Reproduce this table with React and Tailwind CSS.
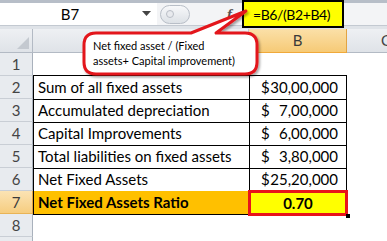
import React from "react";

const rows = [
  { n: 1 },
  { n: 2, a: "Sum of all fixed assets", b: "30,00,000" },
  { n: 3, a: "Accumulated depreciation", b: "7,00,000" },
  { n: 4, a: "Capital Improvements", b: "6,00,000" },
  { n: 5, a: "Total liabilities on fixed assets", b: "3,80,000" },
  { n: 6, a: "Net Fixed Assets", b: "25,20,000" },
  { n: 7, sel: true },
  { n: 8 },
  { n: "" },
];

function RowHeader({ n, sel }) {
  return (
    <div
      className={
        "h-[23px] flex items-center justify-center border-b border-r text-[15px] " +
        (sel
          ? "bg-gradient-to-b from-[#fbe3b4] to-[#f6cd7f] border-b-[#e9b456] border-r-[#e2a443] text-[#3a3a3a]"
          : "bg-[#e8ebef] border-b-[#c9ced5] border-r-[#a9b1bc] text-[#444]")
      }
    >
      {n}
    </div>
  );
}

export default function App() {
  return (
    <div
      className="relative w-[387px] h-[241px] overflow-hidden bg-white"
      style={{ fontFamily: "Lato, 'Liberation Sans', sans-serif" }}
    >
      {/* formula bar */}
      <div className="h-[29px] flex flex-col bg-[#dfe3e8]">
        <div className="h-[3px] bg-[#b7bec8]" />
        <div className="h-[23px] flex bg-white border-b border-[#c3c9d1]">
          <div className="w-[157px] flex items-center">
            <div className="w-[140px] text-center text-[15px] text-black">B7</div>
            <svg width="9" height="6" viewBox="0 0 9 6" className="ml-[2px]">
              <path d="M0 0 L9 0 L4.5 5 Z" fill="#444" />
            </svg>
          </div>
          <div className="flex-1 flex items-center bg-[#f3f4f6]">
            <div className="ml-[3px] w-[30px] h-[19px] rounded-full border border-[#b8bec7] bg-gradient-to-b from-[#f7f8fa] to-[#dde1e6] flex items-center pl-[5px]">
              <div className="w-[8px] h-[8px] rounded-full border border-[#b9bec6] bg-[#e8eaee]" />
            </div>
            <div
              className="ml-[37px] text-[15px] italic font-bold text-[#555]"
              style={{ fontFamily: "'Liberation Serif', serif" }}
            >
              f
            </div>
          </div>
        </div>
      </div>

      {/* header row */}
      <div className="grid grid-cols-[33px_216px_98px_1fr] h-[24px]">
        <div className="relative bg-gradient-to-b from-[#eef0f3] to-[#dfe3e8] border-r border-b border-r-[#b3bac4] border-b-[#b3bac4]">
          <svg width="12" height="12" viewBox="0 0 12 12" className="absolute right-[3px] bottom-[3px]">
            <path d="M12 0 L12 12 L0 12 Z" fill="#c4c9d0" />
          </svg>
        </div>
        <div className="bg-gradient-to-b from-[#eef0f3] to-[#dfe3e8] border-r border-b border-r-[#c3c9d1] border-b-[#b3bac4]" />
        <div className="flex items-center justify-center text-[15px] text-[#3a3a3a] bg-gradient-to-b from-[#fbe0a8] to-[#f6ca76] border-r border-b border-r-[#e2a443] border-b-[#f0a93a]">
          B
        </div>
        <div className="flex items-center justify-end text-[15px] text-[#444] bg-gradient-to-b from-[#eef0f3] to-[#dfe3e8] border-b border-b-[#b3bac4] overflow-hidden">
          <span className="translate-x-[4px]">C</span>
        </div>
      </div>

      {/* rows */}
      {rows.map((r, i) => {
        const inTable = r.n >= 2 && r.n <= 6;
        if (r.sel) {
          return (
            <div key={i} className="grid grid-cols-[33px_216px_98px_1fr] h-[23px]">
              <RowHeader n={r.n} sel />
              <div className="flex items-center pl-[4px] bg-[#ffc000] border-l border-b border-black text-[15px] font-bold text-black">
                Net Fixed Assets Ratio
              </div>
              <div className="relative flex items-center justify-center bg-[#ffff00] text-[15px] font-bold text-black">
                <div className="absolute left-[-1px] top-[-1px] right-[-1px] bottom-[-1px] border-[3px] border-[#e8141b]" />
                <span className="relative">0.70</span>
                <div className="absolute right-[-3px] bottom-[-3px] w-[4px] h-[4px] bg-black" />
              </div>
              <div />
            </div>
          );
        }
        return (
          <div key={i} className="grid grid-cols-[33px_216px_98px_1fr] h-[23px]">
            <RowHeader n={r.n} />
            <div
              className={
                "flex items-center pl-[4px] text-[15px] text-black whitespace-nowrap " +
                (inTable ? "border-l border-b border-black" : r.n === 1 ? "border-b border-black" : "")
              }
            >
              {r.a}
            </div>
            <div
              className={
                "flex items-center justify-between pl-[11px] pr-[8px] text-[15px] text-black " +
                (inTable ? "border-l border-r border-b border-black" : r.n === 1 ? "border-b border-black" : "")
              }
            >
              {r.b ? (
                <>
                  <span>$</span>
                  <span>{r.b}</span>
                </>
              ) : null}
            </div>
            <div />
          </div>
        );
      })}

      {/* yellow formula box */}
      <div className="absolute left-[242px] top-0 w-[102px] h-[28px] bg-[#ffff00] border-2 border-black flex items-center pl-[9px] text-[14px] tracking-[-0.4px] text-black">
        =B6/(B2+B4)
      </div>

      {/* callout */}
      <svg className="absolute left-0 top-0" width="387" height="241" viewBox="0 0 387 241">
        <defs>
          <filter id="sh" x="-10%" y="-10%" width="130%" height="140%">
            <feDropShadow dx="1.5" dy="2" stdDeviation="1.2" floodColor="#000" floodOpacity="0.35" />
          </filter>
        </defs>
        <path
          d="M96 33 L191 33 L246 11 L216 33 L245 33 Q257 33 257 45 L257 62 Q257 74 245 74 L96 74 Q84 74 84 62 L84 45 Q84 33 96 33 Z"
          fill="#fff"
          stroke="#e3161c"
          strokeWidth="3"
          strokeLinejoin="round"
          filter="url(#sh)"
        />
      </svg>
      <div className="absolute left-[93px] top-[38px] text-[11px] leading-[15px] text-black">
        <div>Net fixed asset / (Fixed</div>
        <div>assets+ Capital improvement)</div>
      </div>
    </div>
  );
}
